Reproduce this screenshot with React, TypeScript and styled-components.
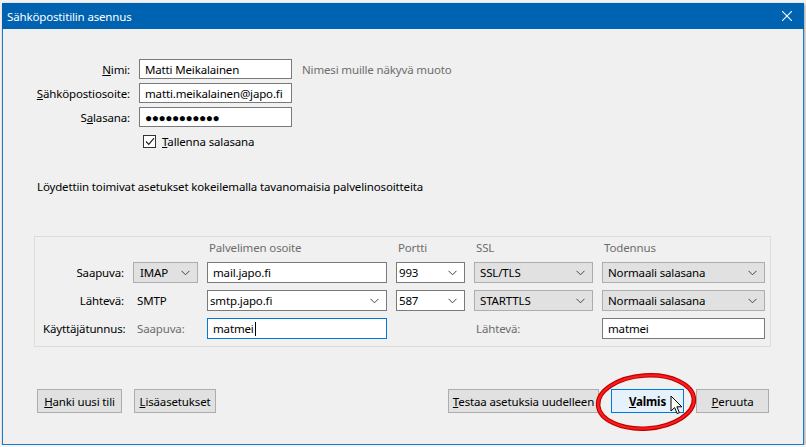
import React from 'react';
import styled, { createGlobalStyle } from 'styled-components';

const GlobalStyle = createGlobalStyle`
  body {
    margin: 0;
    background: #f4f4f4;
    font-family: 'Noto Sans', 'Liberation Sans', sans-serif;
    font-size: 11.5px;
    letter-spacing: -0.15px;
    color: #000;
  }
`;

const Window = styled.div`
  position: relative;
  width: 800px;
  height: 441px;
  margin: 3px 0 0 2px;
  border: 1px solid #1a79c9;
  border-top: none;
  background: #f0f0f0;
  display: flex;
  flex-direction: column;
  box-shadow: 1px 1px 3px rgba(0, 0, 0, 0.35);
`;

const TitleBar = styled.div`
  height: 26px;
  margin: 0 -1px;
  padding: 0 12px 0 5px;
  background: #0063b1;
  color: #fff;
  display: flex;
  align-items: center;
  justify-content: space-between;
`;

const Content = styled.div`
  flex: 1;
  display: flex;
  flex-direction: column;
`;

const TopForm = styled.div`
  margin-top: 30px;
  display: grid;
  grid-template-columns: 127px 153px auto;
  grid-auto-rows: 20px;
  column-gap: 9px;
  row-gap: 4px;
  align-items: center;
`;

const Label = styled.label`
  text-align: right;
  white-space: nowrap;
`;

const TextInput = styled.div<{ focused?: boolean }>`
  height: 100%;
  box-sizing: border-box;
  border: 1px solid ${(p) => (p.focused ? '#0078d7' : '#7a7a7a')};
  background: #fff;
  display: flex;
  align-items: center;
  padding: 0 4px 0 5px;
  white-space: nowrap;
  overflow: hidden;
`;

const Caret = styled.span`
  display: inline-block;
  width: 1px;
  height: 14px;
  margin-left: 1px;
  background: #000;
`;

const Dots = styled.span`
  font-size: 12px;
  letter-spacing: -0.5px;
`;

const Hint = styled.span`
  color: #6d6d6d;
  margin-left: 1px;
  white-space: nowrap;
`;

const CheckRow = styled.div`
  grid-column: 2 / 4;
  display: flex;
  align-items: center;
  gap: 6px;
  padding-left: 4px;
`;

const CheckBox = styled.span`
  width: 13px;
  height: 13px;
  box-sizing: border-box;
  border: 1px solid #333;
  background: #fff;
  display: flex;
  align-items: center;
  justify-content: center;
`;

const Status = styled.div`
  margin: 28px 0 0 34px;
  line-height: 15px;
`;

const Group = styled.div`
  margin: 42px 0 0 31px;
  width: 737px;
  box-sizing: border-box;
  border: 1px solid #dcdcdc;
  padding: 0 0 7px 8px;
  display: grid;
  grid-template-columns: 81px 65px 180px 69px 119px 163px;
  grid-template-rows: 18px 21px 21px 21px;
  column-gap: 9px;
  row-gap: 7px;
  align-items: center;
`;

const ColHead = styled.div`
  align-self: end;
  color: #6d6d6d;
  padding-left: 2px;
  line-height: 15px;
`;

const Muted = styled.span<{ pad?: number }>`
  color: #6d6d6d;
  padding-left: ${(p) => p.pad ?? 4}px;
`;

const Plain = styled.span`
  padding-left: 4px;
`;

const Combo = styled.div<{ editable?: boolean; pad?: number }>`
  height: 100%;
  box-sizing: border-box;
  border: 1px solid ${(p) => (p.editable ? '#7a7a7a' : '#adadad')};
  background: ${(p) => (p.editable ? '#fff' : '#e1e1e1')};
  display: flex;
  align-items: center;
  justify-content: space-between;
  padding: 0 7px 0 ${(p) => p.pad ?? 5}px;
  white-space: nowrap;
`;

const ButtonRow = styled.div`
  margin-top: 42px;
  padding: 0 34px 0 34px;
  display: flex;
  justify-content: space-between;
`;

const ButtonGroup = styled.div`
  display: flex;
  gap: 12px;
`;

const Button = styled.button<{ w: number; primary?: boolean }>`
  width: ${(p) => p.w}px;
  height: 24px;
  box-sizing: border-box;
  font-family: inherit;
  font-size: inherit;
  letter-spacing: inherit;
  white-space: nowrap;
  color: #000;
  padding: 0;
  border: 1px solid ${(p) => (p.primary ? '#0078d7' : '#adadad')};
  background: ${(p) => (p.primary ? '#e5f1fb' : '#e1e1e1')};
  font-weight: ${(p) => (p.primary ? 700 : 400)};
`;

const Mark = styled.svg`
  position: absolute;
  left: 590px;
  top: 367px;
  pointer-events: none;
`;

const Pointer = styled.svg`
  position: absolute;
  left: 667px;
  top: 392px;
  pointer-events: none;
`;

const Chevron = () => (
  <svg width="9" height="6" viewBox="0 0 9 6">
    <path d="M0.5 0.8 L4.5 4.8 L8.5 0.8" fill="none" stroke="#444" strokeWidth="1" />
  </svg>
);

const App = () => {
  return (
    <>
      <GlobalStyle />
      <Window>
        <TitleBar>
          <span>Sähköpostitilin asennus</span>
          <svg width="10" height="10" viewBox="0 0 10 10">
            <path d="M0 0 L10 10 M10 0 L0 10" stroke="#fff" strokeWidth="1.1" />
          </svg>
        </TitleBar>
        <Content>
          <TopForm>
            <Label>
              <u>N</u>imi:
            </Label>
            <TextInput>Matti Meikalainen</TextInput>
            <Hint>Nimesi muille näkyvä muoto</Hint>
            <Label>
              <u>S</u>ähköpostiosoite:
            </Label>
            <TextInput>matti.meikalainen@japo.fi</TextInput>
            <span />
            <Label>
              S<u>a</u>lasana:
            </Label>
            <TextInput>
              <Dots>●●●●●●●●●●●</Dots>
            </TextInput>
            <span />
            <span />
            <CheckRow>
              <CheckBox>
                <svg width="10" height="9" viewBox="0 0 10 9">
                  <path d="M1 4.5 L3.8 7.3 L9 1.2" fill="none" stroke="#222" strokeWidth="1.2" />
                </svg>
              </CheckBox>
              <span>
                <u>T</u>allenna salasana
              </span>
            </CheckRow>
          </TopForm>

          <Status>Löydettiin toimivat asetukset kokeilemalla tavanomaisia palvelinosoitteita</Status>

          <Group>
            <span />
            <span />
            <ColHead>Palvelimen osoite</ColHead>
            <ColHead>Portti</ColHead>
            <ColHead>SSL</ColHead>
            <ColHead>Todennus</ColHead>

            <Label>Saapuva:</Label>
            <Combo pad={6}>
              IMAP <Chevron />
            </Combo>
            <TextInput>mail.japo.fi</TextInput>
            <Combo editable pad={2}>
              993 <Chevron />
            </Combo>
            <Combo>
              SSL/TLS <Chevron />
            </Combo>
            <Combo>
              Normaali salasana <Chevron />
            </Combo>

            <Label>Lähtevä:</Label>
            <Plain>SMTP</Plain>
            <Combo editable pad={2}>
              smtp.japo.fi <Chevron />
            </Combo>
            <Combo editable pad={2}>
              587 <Chevron />
            </Combo>
            <Combo>
              STARTTLS <Chevron />
            </Combo>
            <Combo>
              Normaali salasana <Chevron />
            </Combo>

            <Label>Käyttäjätunnus:</Label>
            <Muted>Saapuva:</Muted>
            <TextInput focused>
              matmei
              <Caret />
            </TextInput>
            <span />
            <Muted pad={2}>Lähtevä:</Muted>
            <TextInput>matmei</TextInput>
          </Group>

          <ButtonRow>
            <ButtonGroup>
              <Button w={85}>
                <u>H</u>anki uusi tili
              </Button>
              <Button w={82}>
                <u>L</u>isäasetukset
              </Button>
            </ButtonGroup>
            <ButtonGroup>
              <Button w={151}>
                <u>T</u>estaa asetuksia uudelleen
              </Button>
              <Button w={73} primary>
                <u>V</u>almis
              </Button>
              <Button w={73}>
                <u>P</u>eruuta
              </Button>
            </ButtonGroup>
          </ButtonRow>
        </Content>

        <Mark width="106" height="64" viewBox="0 0 106 64">
          <g transform="rotate(-4 53 32)">
            <ellipse cx="53" cy="32" rx="48" ry="26.5" fill="none" stroke="#b80000" strokeWidth="4.5" />
            <ellipse cx="53" cy="32" rx="48" ry="26.5" fill="none" stroke="#ff1a1a" strokeWidth="2.2" />
          </g>
        </Mark>
        <Pointer width="14" height="21" viewBox="0 0 14 21">
          <path
            d="M1 1 L1 16 L4.6 12.6 L7.2 18.6 L9.4 17.7 L6.9 11.8 L11.8 11.8 Z"
            fill="#fff"
            stroke="#000"
            strokeWidth="1"
            strokeLinejoin="round"
          />
        </Pointer>
      </Window>
    </>
  );
};

export default App;
